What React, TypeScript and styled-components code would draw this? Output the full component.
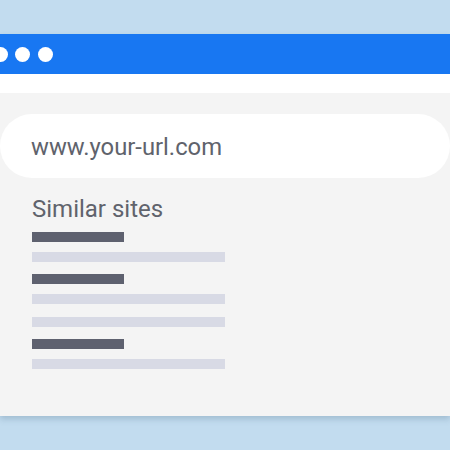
import styled, { createGlobalStyle } from 'styled-components';

const GlobalStyle = createGlobalStyle`
  html, body {
    margin: 0;
    padding: 0;
    background: #c2dcef;
  }
  body {
    font-family: Roboto, "Liberation Sans", Arial, sans-serif;
  }
`;

const Page = styled.div`
  width: 450px;
  height: 450px;
  overflow: hidden;
  background: #c2dcef;
  padding-top: 34px;
  box-sizing: border-box;
`;

const Window = styled.div`
  display: flex;
  flex-direction: column;
  box-shadow: 0 3px 6px rgba(60, 90, 120, 0.25);
`;

const TitleBar = styled.div`
  height: 40px;
  background: #1877f2;
  display: flex;
  align-items: center;
  gap: 7.5px;
  margin-left: -7.5px;
`;

const Dot = styled.span`
  width: 15px;
  height: 15px;
  border-radius: 50%;
  background: #ffffff;
  flex: none;
`;

const Strip = styled.div`
  height: 19px;
  background: #ffffff;
`;

const Body = styled.div`
  height: 323px;
  background: #f4f4f4;
  padding-top: 21px;
  box-sizing: border-box;
`;

const UrlPill = styled.div`
  height: 64px;
  background: #ffffff;
  border-radius: 32px;
  display: flex;
  align-items: center;
  padding-left: 31px;
  padding-top: 1px;
  box-sizing: border-box;
  font-size: 23.8px;
  color: #60636c;
`;

const Section = styled.div`
  padding: 19px 0 0 32px;
  display: flex;
  flex-direction: column;
`;

const Heading = styled.div`
  font-size: 24px;
  line-height: 24px;
  color: #60636c;
  margin-bottom: 11px;
`;

const Bar = styled.div<{ $dark?: boolean; $gap: number }>`
  height: 10px;
  width: ${(p) => (p.$dark ? 92 : 193)}px;
  background: ${(p) => (p.$dark ? '#5e616f' : '#d8dae5')};
  margin-top: ${(p) => p.$gap}px;
`;

const bars = [
  { dark: true, gap: 0 },
  { dark: false, gap: 10 },
  { dark: true, gap: 12 },
  { dark: false, gap: 10 },
  { dark: false, gap: 13 },
  { dark: true, gap: 12 },
  { dark: false, gap: 10 },
];

export default function App() {
  return (
    <Page>
      <GlobalStyle />
      <Window>
        <TitleBar>
          <Dot />
          <Dot />
          <Dot />
        </TitleBar>
        <Strip />
        <Body>
          <UrlPill>www.your-url.com</UrlPill>
          <Section>
            <Heading>Similar sites</Heading>
            {bars.map((b, i) => (
              <Bar key={i} $dark={b.dark} $gap={b.gap} />
            ))}
          </Section>
        </Body>
      </Window>
    </Page>
  );
}
